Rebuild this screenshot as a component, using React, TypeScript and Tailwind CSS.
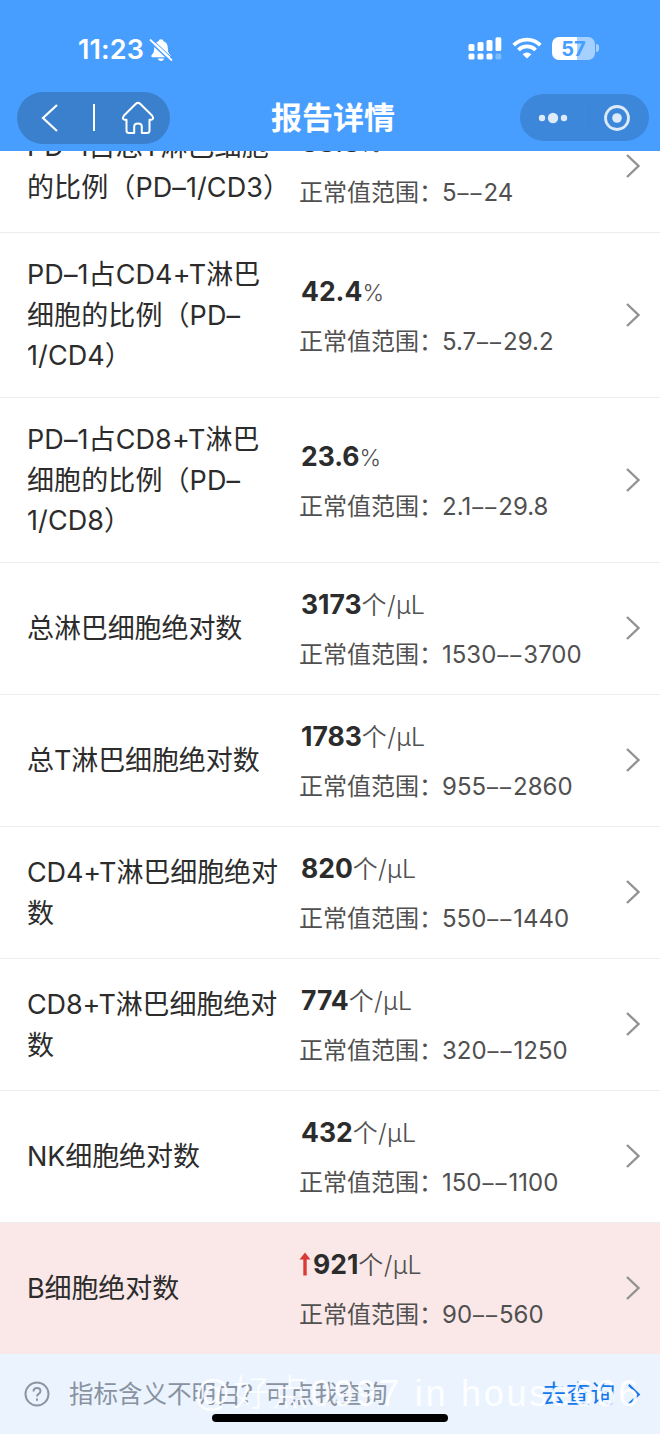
import React from "react";

type Item = {
  name: string[];
  value: string;
  unit: string;
  range: [string, string];
  high?: boolean;
  tall?: boolean;
};

const items: Item[] = [
  { name: ["PD–1占总T淋巴细胞", "的比例（PD–1/CD3）"], value: "38.8", unit: "%", range: ["5", "24"] },
  { name: ["PD–1占CD4+T淋巴", "细胞的比例（PD–", "1/CD4）"], value: "42.4", unit: "%", range: ["5.7", "29.2"], tall: true },
  { name: ["PD–1占CD8+T淋巴", "细胞的比例（PD–", "1/CD8）"], value: "23.6", unit: "%", range: ["2.1", "29.8"], tall: true },
  { name: ["总淋巴细胞绝对数"], value: "3173", unit: "个/μL", range: ["1530", "3700"] },
  { name: ["总T淋巴细胞绝对数"], value: "1783", unit: "个/μL", range: ["955", "2860"] },
  { name: ["CD4+T淋巴细胞绝对", "数"], value: "820", unit: "个/μL", range: ["550", "1440"] },
  { name: ["CD8+T淋巴细胞绝对", "数"], value: "774", unit: "个/μL", range: ["320", "1250"] },
  { name: ["NK细胞绝对数"], value: "432", unit: "个/μL", range: ["150", "1100"] },
  { name: ["B细胞绝对数"], value: "921", unit: "个/μL", range: ["90", "560"], high: true },
];

function Chevron({ className }: { className: string }) {
  return (
    <svg viewBox="0 0 16 26" className={className} fill="none" stroke="currentColor" strokeWidth="2.4">
      <path d="M2 2 L13.5 13 L2 24" />
    </svg>
  );
}

function StatusBar() {
  return (
    <div className="flex h-[84px] items-start justify-between pr-[61px] pl-[78px] text-white">
      <div className="flex items-center pt-[34px]">
        <span className="text-[27px] leading-8 font-semibold tracking-[0.1px]">11:23</span>
        <svg viewBox="0 0 24 24" className="ml-[5px] h-6 w-6" fill="white">
          <path d="M12 1.2c-1.500 0-2.300.900-2.500 2.100C6.500 4.300 5.200 6.800 5.200 10c0 3.800-.700 5.200-2.300 6.800-1 1-.800 2.400.700 2.400h16.800c1.500 0 1.700-1.400.700-2.400-1.600-1.600-2.300-3-2.300-6.800 0-3.200-1.300-5.700-4.300-6.700-.200-1.200-1-2.100-2.500-2.100zM8.800 20.600h6.400c-.400 1.500-1.600 2.300-3.200 2.300s-2.800-.800-3.200-2.300z" />
          <path d="M0 3.200 L21.500 23.200" stroke="#479eff" strokeWidth="1.600" />
          <path d="M2.600 .800 L24 20.800" stroke="#479eff" strokeWidth="1" />
          <path d="M1.500 2 L22.500 22" stroke="white" strokeWidth="1.800" strokeLinecap="round" />
        </svg>
      </div>
      <div className="flex items-center pt-[36px]">
        <svg viewBox="0 0 34 24" className="h-6 w-[34px]" fill="white">
          <rect x="0.500" y="8" width="6" height="7" rx="1.500" />
          <rect x="9.500" y="6" width="6" height="9" rx="1.500" />
          <rect x="18.500" y="4" width="6" height="11" rx="1.500" />
          <rect x="27.500" y="1.200" width="5.800" height="13.800" rx="1.500" />
          <rect x="0.500" y="17.500" width="6" height="6" rx="1.500" />
          <rect x="9.500" y="17.500" width="6" height="6" rx="1.500" />
          <rect x="18.500" y="17.500" width="6" height="6" rx="1.500" />
          <rect x="27.500" y="17.500" width="5.800" height="6" rx="1.500" opacity="0.300" />
        </svg>
        <svg viewBox="0 0 30 22" className="ml-[10px] h-[22px] w-[30px]" fill="none" stroke="white" strokeWidth="3.800">
          <path d="M1.700 8.200 A18.800 18.800 0 0 1 28.300 8.200" />
          <path d="M6.400 13 A12.200 12.200 0 0 1 23.600 13" />
          <path d="M10.600 17.200 A6.300 6.300 0 0 1 19.400 17.200 L15 21.500 Z" fill="white" stroke="none" />
        </svg>
        <div className="ml-[10px] flex h-[23px] w-[43px] items-center justify-center rounded-[7px] bg-linear-to-r from-white from-57% to-[#a5d0ff] to-57% pt-px text-[20px] leading-none font-bold text-[#479eff]">
          57
        </div>
        <div className="ml-px h-2 w-[3px] rounded-r-full bg-[#a5d0ff]" />
      </div>
    </div>
  );
}

function NavBar() {
  return (
    <div className="grid h-[67px] grid-cols-[1fr_auto_1fr] items-center pr-[11px] pl-[17px] text-white">
      <div className="flex h-[52px] w-[153px] items-center rounded-full bg-[#3a80cc]">
        <svg viewBox="0 0 18 30" className="ml-6 h-[30px] w-[18px]" fill="none" stroke="white" strokeWidth="2.200">
          <path d="M16 2 L2 15 L16 28" />
        </svg>
        <div className="ml-[34px] h-[27px] w-[1.500px] bg-white" />
        <svg viewBox="0 0 34 34" className="ml-[26px] h-[34px] w-[34px]" fill="none" stroke="white" strokeWidth="2" strokeLinejoin="round">
          <path d="M14.600 3 Q17 .800 19.400 3 L31 14.500 Q33.500 18 30.300 18.800 H28.500 V29.500 Q28.500 32 26 32 H20.800 V25.500 Q20.800 22.500 17 22.500 Q13.200 22.500 13.200 25.500 V32 H8 Q5.500 32 5.500 29.500 V18.800 H3.700 Q.500 18 3 14.500 Z" />
        </svg>
      </div>
      <h1 className="text-[31px] leading-[46px] font-bold">报告详情</h1>
      <div className="flex h-[47px] w-[129px] items-center justify-self-end rounded-full bg-[#3d87da]">
        <svg viewBox="0 0 30 12" className="ml-[18px] h-3 w-[30px]" fill="#dceaf9">
          <circle cx="4" cy="6" r="3.200" />
          <circle cx="15" cy="6" r="5.200" />
          <circle cx="26" cy="6" r="3.200" />
        </svg>
        <div className="ml-4 h-[30px] w-px bg-[#4189d8]" />
        <svg viewBox="0 0 28 28" className="ml-[18px] h-7 w-7" fill="none">
          <circle cx="14" cy="14" r="11.500" stroke="#dceaf9" strokeWidth="2.800" />
          <circle cx="14" cy="14" r="4.800" fill="#dceaf9" />
        </svg>
      </div>
    </div>
  );
}

function Row({ item }: { item: Item }) {
  const height = item.tall ? "h-[165px]" : item.high ? "h-[131px]" : "h-[132px]";
  const tone = item.high ? "bg-[#fae8e8]" : "border-b border-[#ededed] bg-white";
  const unitSize = item.unit === "%" ? "text-[23px]" : "text-[25px] tracking-[0.3px]";
  const nameSpacing = item.name[0].startsWith("PD") ? "tracking-[0.100px]" : "tracking-[-0.100px]";
  return (
    <li className={`flex shrink-0 items-center pr-[19px] pl-[27px] ${height} ${tone}`}>
      <div className={`w-[272px] shrink-0 pt-[2px] text-[27px] leading-[40.500px] font-[370] text-[#2c2c2c] ${nameSpacing}`}>
        {item.name.map((line) => (
          <div key={line} className="whitespace-nowrap">{line}</div>
        ))}
      </div>
      <div className="flex-1 pt-[3px] whitespace-nowrap">
        <div className={`flex h-[50px] items-center ${item.high ? "" : "pl-[2px]"}`}>
          {item.high && (
            <svg viewBox="0 0 12 24" className="mr-[2px] mb-[3px] h-6 w-3" fill="#d93a36">
              <path d="M6 0.500 L11.500 7.500 H7.700 V23.500 H4.300 V7.500 H0.500 Z" />
            </svg>
          )}
          <div className="text-[#505050]">
            <span className="text-[26.500px] font-bold text-[#2c2c2c]">{item.value}</span>
            <span className={`font-[330] ${unitSize}`}>{item.unit}</span>
          </div>
        </div>
        <div className="flex h-[50px] items-center text-[24px] font-[370] text-[#505050]">
          <span className="w-[143px]">正常值范围：</span>
          <span>
            {item.range[0]}
            <span className="ml-px text-[22px] tracking-[2px]">––</span>
            {item.range[1]}
          </span>
        </div>
      </div>
      <Chevron className="mb-px h-[26px] w-4 text-[#929292]" />
    </li>
  );
}

export default function App() {
  return (
    <div className="relative flex h-[1434px] w-[660px] flex-col overflow-hidden bg-white font-['Inter','Noto_Sans_CJK_SC',sans-serif]">
      <header className="z-10 h-[151px] shrink-0 bg-[#479eff]">
        <StatusBar />
        <NavBar />
      </header>
      <ul className="-mt-[50px] shrink-0">
        {items.map((item) => (
          <Row key={item.name[0]} item={item} />
        ))}
      </ul>
      <footer className="flex flex-1 items-start bg-[#ebf3ff] pt-5 pr-[19px] pl-6">
        <div className="flex h-10 flex-1 items-center">
          <svg viewBox="0 0 26 26" className="h-[26px] w-[26px]" fill="none" stroke="#8c95a3" strokeWidth="2">
            <circle cx="13" cy="13" r="11.500" />
            <path d="M9.500 10.500 Q9.500 7 13 7 Q16.500 7 16.500 10 Q16.500 12 14.500 13 Q13 13.800 13 15.500 M13 17.500 V19.700" />
          </svg>
          <span className="ml-[19px] pt-px text-[24.500px] text-[#8992a0]">指标含义不明白？可点我查询</span>
        </div>
        <div className="flex h-10 items-center text-[#1677ec]">
          <span className="pt-px text-[24.500px]">去查询</span>
          <Chevron className="ml-3 h-[23px] w-[14px]" />
        </div>
      </footer>
      <div className="absolute top-[1370px] left-[194px] font-['Liberation_Sans','Noto_Sans_CJK_SC',sans-serif] text-[36px] leading-[48px] font-light tracking-[2.750px] whitespace-nowrap text-white/90">
        @好点0997 in house666
      </div>
      <div className="absolute top-[1414px] left-[212px] h-2 w-[236px] rounded-full bg-black" />
    </div>
  );
}
